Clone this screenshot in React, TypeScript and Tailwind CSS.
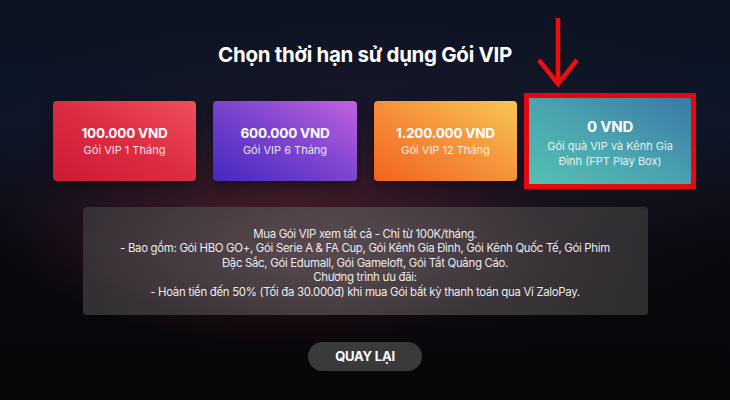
import { ReactNode } from 'react'

interface PlanCardProps {
  price: string
  label: ReactNode
  className: string
  big?: boolean
}

function PlanCard({ price, label, className, big }: PlanCardProps) {
  return (
    <div
      className={`flex flex-col items-center justify-center rounded-[4px] text-center text-white shadow-[0_4px_14px_rgba(0,0,0,0.45)] ${className}`}
    >
      <div
        className={
          big
            ? 'text-[15px] font-bold leading-[18px] tracking-[-0.2px]'
            : 'text-[13.5px] font-bold leading-[17px] tracking-[-0.2px]'
        }
      >
        {price}
      </div>
      <div className={big ? 'mt-[3px] text-[11px] leading-[15px] text-white/85' : 'mt-[1px] text-[11px] leading-[15px] text-white/85'}>
        {label}
      </div>
    </div>
  )
}

function RedArrow() {
  return (
    <svg
      className="absolute left-[534px] top-[16px]"
      width="48"
      height="72"
      viewBox="0 0 48 72"
      fill="none"
    >
      <path d="M24 2 V68" stroke="#f00d0d" strokeWidth="4.5" />
      <path d="M5 44 L24 68 L43 44" stroke="#f00d0d" strokeWidth="4.5" strokeLinejoin="miter" />
    </svg>
  )
}

export default function App() {
  return (
    <div
      className="relative h-[400px] w-[730px] overflow-hidden bg-[radial-gradient(ellipse_38%_30%_at_38%_56%,rgba(120,40,55,0.45),transparent),radial-gradient(ellipse_60%_45%_at_50%_45%,rgba(70,30,50,0.35),transparent),linear-gradient(180deg,#0b1220_0%,#0c1628_30%,#09080e_62%,#060508_100%)] font-['Inter','Noto_Sans',sans-serif]"
    >
      <RedArrow />

      <div className="flex flex-col items-center">
        <h1 className="mt-[41px] text-[20.5px] font-bold leading-[28px] tracking-[-0.3px] text-white">
          Chọn thời hạn sử dụng Gói VIP
        </h1>

        <div className="mt-[24px] flex w-full items-center pl-[53px]">
          <PlanCard
            price="100.000 VND"
            label="Gói VIP 1 Tháng"
            className="h-[80px] w-[143px] bg-[linear-gradient(30deg,#cc1a34_0%,#dd2c42_50%,#f04f5d_100%)]"
          />
          <PlanCard
            price="600.000 VND"
            label="Gói VIP 6 Tháng"
            className="ml-[17px] h-[80px] w-[144px] bg-[linear-gradient(30deg,#4528bd_0%,#7a44cf_50%,#c261df_100%)]"
          />
          <PlanCard
            price="1.200.000 VND"
            label="Gói VIP 12 Tháng"
            className="ml-[17px] h-[80px] w-[143px] bg-[linear-gradient(30deg,#f2631f_0%,#f5913a_50%,#f8c653_100%)]"
          />
          <div className="ml-[7px] border-[5px] border-[#e8070f]">
            <PlanCard
              big
              price="0 VND"
              label={
                <>
                  Gói quà VIP và Kênh Gia
                  <br />
                  Đình (FPT Play Box)
                </>
              }
              className="h-[86px] w-[162px] rounded-none bg-[linear-gradient(30deg,#53c0b2_0%,#4aa2af_50%,#3a79a6_100%)] pt-[5px] shadow-none"
            />
          </div>
        </div>

        <div className="mt-[18px] flex h-[108px] w-[565px] flex-col items-center justify-center rounded-[4px] bg-[radial-gradient(ellipse_45%_70%_at_42%_40%,rgba(120,95,105,0.35),transparent),linear-gradient(90deg,rgba(58,54,58,0.85),rgba(78,72,76,0.8)_45%,rgba(55,52,56,0.85))] pt-[4px] text-center text-[11.4px] leading-[14.5px] tracking-[-0.3px] text-[#ececec]">
          <p>Mua Gói VIP xem tất cả - Chỉ từ 100K/tháng.</p>
          <p>- Bao gồm: Gói HBO GO+, Gói Serie A &amp; FA Cup, Gói Kênh Gia Đình, Gói Kênh Quốc Tế, Gói Phim</p>
          <p>Đặc Sắc, Gói Edumall, Gói Gameloft, Gói Tắt Quảng Cáo.</p>
          <p>Chương trình ưu đãi:</p>
          <p>- Hoàn tiền đến 50% (Tối đa 30.000đ) khi mua Gói bất kỳ thanh toán qua Ví ZaloPay.</p>
        </div>

        <button className="mt-[27px] flex h-[29px] w-[114px] items-center justify-center rounded-full bg-[#3a3a3c] text-[13px] font-bold tracking-[-0.2px] text-white">
          QUAY LẠI
        </button>
      </div>
    </div>
  )
}
